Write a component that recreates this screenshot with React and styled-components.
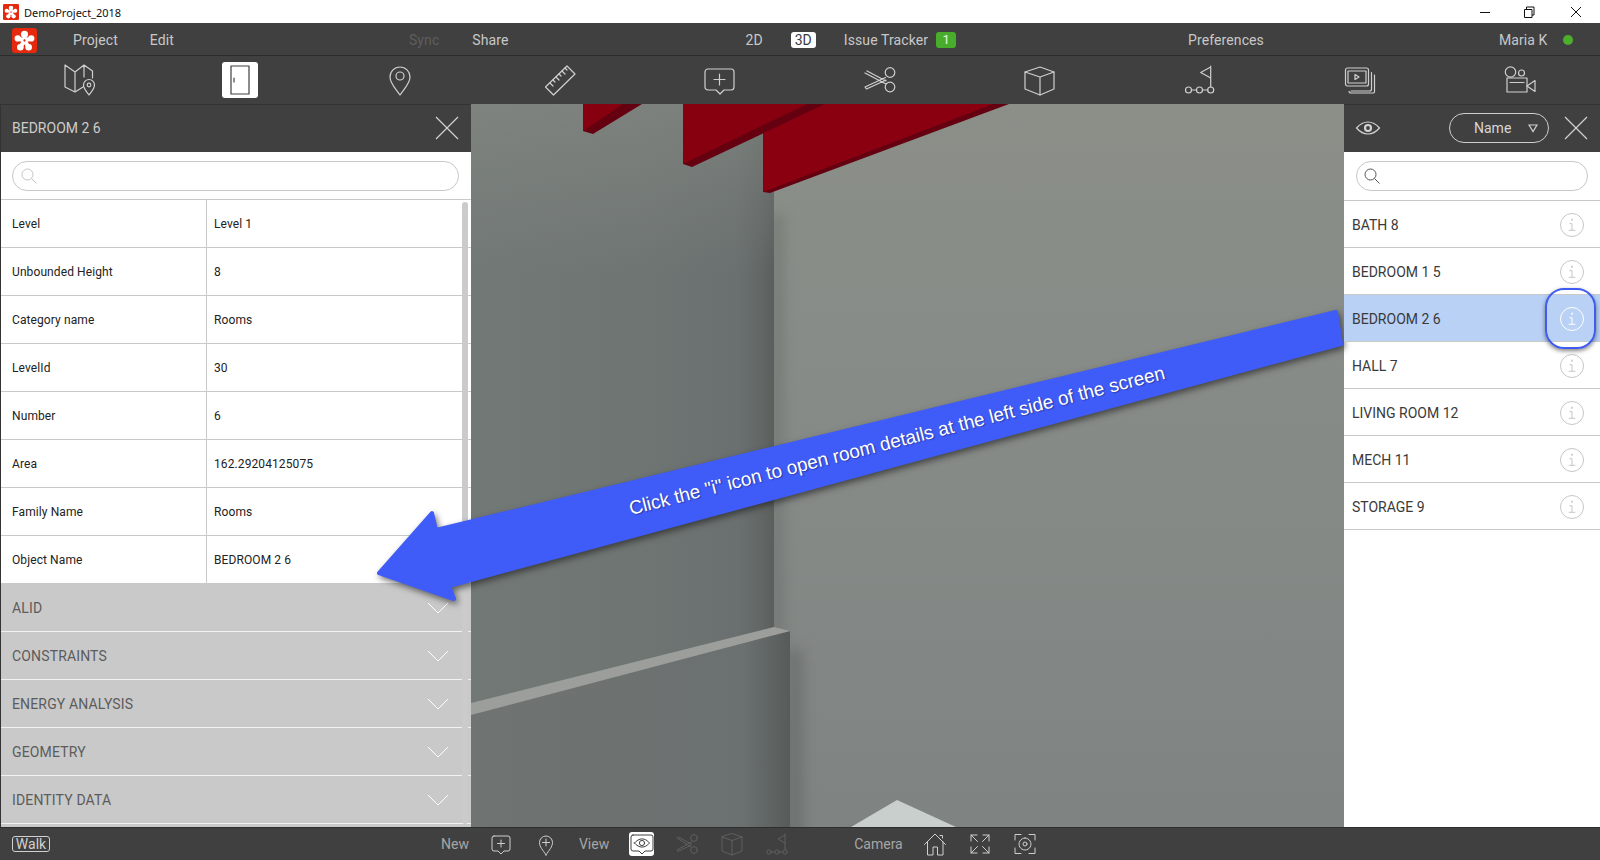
import React from 'react';
import styled, { createGlobalStyle } from 'styled-components';

const GlobalStyle = createGlobalStyle`
  html, body {
    margin: 0;
    padding: 0;
    background: #404040;
    overflow: hidden;
  }
  * { box-sizing: border-box; }
`;

const Page = styled.div`
  position: relative;
  width: 1600px;
  height: 860px;
  display: flex;
  flex-direction: column;
  font-family: Roboto, "Liberation Sans", sans-serif;
  overflow: hidden;
`;

/* window title bar */
const TitleBar = styled.div`
  height: 23px;
  background: #fff;
  display: flex;
  align-items: center;
  padding-left: 3px;
  flex: none;
`;

const TitleText = styled.span`
  margin-left: 5px;
  padding-top: 1px;
  font-family: "Noto Sans", "Open Sans", sans-serif;
  font-size: 11px;
  color: #111;
`;

const WindowButtons = styled.div`
  margin-left: auto;
  display: flex;
  align-items: center;
`;

const WindowButton = styled.svg`
  width: 46px;
  height: 22px;
  display: block;
  fill: none;
  stroke: #111;
  stroke-width: 1;
`;

/* menu */
const MenuBar = styled.div`
  height: 33px;
  background: #404040;
  border-bottom: 1px solid #2b2b2b;
  display: flex;
  align-items: center;
  padding: 2px 0 0 12px;
  flex: none;
`;

const MenuItem = styled.span`
  margin-left: ${(p) => p.$gap || 0}px;
  font-size: 14px;
  letter-spacing: 0.1px;
  color: ${(p) => (p.$dim ? '#5e5e5e' : '#c8c8c8')};
  white-space: nowrap;
`;

const ModeBadge = styled.span`
  margin-left: ${(p) => p.$gap || 0}px;
  width: 25px;
  height: 16px;
  border-radius: 3px;
  background: #fff;
  color: #3c3c3c;
  font-size: 14px;
  line-height: 16px;
  text-align: center;
`;

const CountBadge = styled.span`
  margin-left: ${(p) => p.$gap || 0}px;
  width: 20px;
  height: 16px;
  border-radius: 3px;
  background: #47ad2b;
  color: #e8f5e3;
  font-size: 13px;
  line-height: 16px;
  text-align: center;
`;

const StatusDot = styled.span`
  margin-left: ${(p) => p.$gap || 0}px;
  width: 10px;
  height: 10px;
  border-radius: 50%;
  background: #4caf2c;
`;

/* main tools row */
const Toolbar = styled.div`
  height: 48px;
  background: #404040;
  display: grid;
  grid-template-columns: repeat(10, 160px);
  align-items: center;
  justify-items: center;
  flex: none;
`;

const ToolSlot = styled.div`
  width: 36px;
  height: 36px;
  border-radius: 3px;
  display: flex;
  align-items: center;
  justify-content: center;
  background: ${(p) => (p.$active ? '#fff' : 'transparent')};
  color: ${(p) => (p.$active ? '#404040' : '#cfcfcf')};
`;

const ToolSvg = styled.svg`
  width: 36px;
  height: 36px;
  display: block;
  fill: none;
  stroke: currentColor;
  stroke-width: 1.2;
  stroke-linejoin: round;
  stroke-linecap: round;
`;

/* middle area */
const Workspace = styled.div`
  flex: 1;
  display: flex;
  min-height: 0;
`;

const LeftPanel = styled.aside`
  position: relative;
  width: 471px;
  flex: none;
  display: flex;
  flex-direction: column;
  background: #c9c9c9;
  border-left: 1px solid #333;
  overflow: hidden;
`;

const RightPanel = styled.aside`
  width: 256px;
  flex: none;
  display: flex;
  flex-direction: column;
  background: #fff;
`;

const PanelHeader = styled.div`
  height: 48px;
  flex: none;
  background: #404040;
  border-top: 1px solid #333;
  display: flex;
  align-items: center;
  padding: 0 12px 2px 11px;
  color: #cdcdcd;
  font-size: 14px;
`;

const HeaderIcon = styled.svg`
  display: block;
  width: ${(p) => p.$size}px;
  height: ${(p) => p.$size}px;
  fill: none;
  stroke: #d2d2d2;
  stroke-width: 1.2;
  margin-left: ${(p) => (p.$push ? 'auto' : '0')};
`;

const SortPill = styled.div`
  margin-left: auto;
  margin-right: 15px;
  width: 100px;
  height: 30px;
  border: 1px solid #cfcfcf;
  border-radius: 15px;
  display: flex;
  align-items: center;
  padding: 0 10px 0 24px;
  color: #d6d6d6;
  font-size: 14px;
`;

const SearchRow = styled.div`
  height: ${(p) => p.$height}px;
  flex: none;
  background: #fff;
  padding: 9px 12px 8px ${(p) => p.$left}px;
  border-bottom: 1.5px solid #c9c9c9;
`;

const SearchBox = styled.div`
  height: 30px;
  border: 1px solid #c8c8c8;
  border-radius: 15px;
  display: flex;
  align-items: center;
  padding-left: ${(p) => p.$inset}px;
`;

const SearchIcon = styled.svg`
  width: 18px;
  height: 18px;
  fill: none;
  stroke: ${(p) => p.$tone};
  stroke-width: 1;
`;

const PropRow = styled.div`
  height: 48px;
  flex: none;
  display: grid;
  grid-template-columns: 205px 1fr;
  background: #fff;
  border-bottom: 1.5px solid #c9c9c9;
  font-size: 12px;
  color: #222;
`;

const PropCell = styled.div`
  display: flex;
  align-items: center;
  padding-left: ${(p) => (p.$value ? 7 : 11)}px;
  border-left: ${(p) => (p.$value ? '1.5px solid #c9c9c9' : 'none')};
  letter-spacing: 0.1px;
`;

const GroupRow = styled.div`
  height: 48px;
  flex: none;
  display: flex;
  align-items: center;
  justify-content: space-between;
  padding: 0 22px 0 11px;
  background: #c9c9c9;
  border-bottom: 1px solid #f2f2f2;
  color: #5c5c5c;
  font-size: 14px;
  letter-spacing: 0.15px;
`;

const Chevron = styled.svg`
  width: 22px;
  height: 12px;
  fill: none;
  stroke: #fff;
  stroke-width: 1;
`;

const ScrollThumb = styled.div`
  position: absolute;
  left: 461px;
  top: 98px;
  bottom: 3px;
  width: 6px;
  border-radius: 3px;
  background: #cbcbcb;
`;

const Viewport = styled.div`
  flex: 1;
  min-width: 0;
  background: #7a7e7b;
`;

const SceneSvg = styled.svg`
  display: block;
  width: 100%;
  height: 100%;
`;

/* room list */
const RoomRow = styled.div`
  position: relative;
  z-index: ${(p) => (p.$selected ? 1 : 0)};
  height: 47px;
  flex: none;
  display: flex;
  align-items: center;
  justify-content: space-between;
  padding: 2px 16px 0 8px;
  background: ${(p) => (p.$selected ? '#b9d1f5' : '#fff')};
  border-bottom: 1.5px solid #c9c9c9;
  color: #3a3a3a;
  font-size: 14px;
`;

const InfoIcon = styled.svg`
  width: 24px;
  height: 24px;
  display: block;
  fill: none;
  stroke: ${(p) => (p.$selected ? '#fff' : '#c6c6c6')};
  stroke-width: 1;
`;

const Highlight = styled.div`
  position: absolute;
  right: 4px;
  top: -7px;
  width: 51px;
  height: 61px;
  border: 2.5px solid #3f5bf0;
  border-radius: 19px;
  box-shadow: 0 2px 4px rgba(30, 30, 30, 0.55);
`;

/* bottom bar */
const BottomBar = styled.div`
  height: 33px;
  flex: none;
  background: #404040;
  border-top: 1px solid #2e2e2e;
  display: flex;
  align-items: center;
  padding-left: 12px;
`;

const WalkBadge = styled.span`
  width: 38px;
  height: 16px;
  border: 1px solid #d0d0d0;
  border-radius: 3px;
  color: #d0d0d0;
  font-size: 14px;
  line-height: 14px;
  text-align: center;
`;

const BarLabel = styled.span`
  margin-left: ${(p) => p.$gap}px;
  font-size: 14px;
  color: #a6a6a6;
`;

const BarSlot = styled.div`
  margin-left: ${(p) => p.$gap}px;
  width: 25px;
  height: 24px;
  border-radius: 3px;
  display: flex;
  align-items: center;
  justify-content: center;
  background: ${(p) => (p.$active ? '#fff' : 'transparent')};
  color: ${(p) => (p.$active ? '#404040' : p.$dim ? '#5f5f5f' : '#cfcfcf')};
`;

const BarSvg = styled.svg`
  width: 24px;
  height: 24px;
  display: block;
  fill: none;
  stroke: currentColor;
  stroke-width: 1;
  stroke-linejoin: round;
  stroke-linecap: round;
`;

/* annotation laid over the screenshot */
const ArrowSvg = styled.svg`
  position: absolute;
  left: 0;
  top: 0;
  width: 1600px;
  height: 860px;
  pointer-events: none;
  filter: drop-shadow(2px 3px 3px rgba(25, 25, 25, 0.6));
`;

const ArrowText = styled.div`
  position: absolute;
  left: 597px;
  top: 430px;
  width: 600px;
  text-align: center;
  font-family: "Liberation Sans", Arial, sans-serif;
  font-size: 19px;
  color: #fff;
  white-space: nowrap;
  transform: rotate(-14.3deg);
  text-shadow: 1px 1px 1px rgba(20, 30, 90, 0.5);
  pointer-events: none;
`;

const LogoMark = ({ size, radius }) => (
  <svg width={size} height={size} viewBox="0 0 24 24" style={{ display: 'block' }}>
    <rect width="24" height="24" rx={radius} fill="#e5290f" />
    <g stroke="#fff" strokeWidth="4" strokeLinecap="round">
      <line x1="12" y1="12" x2="12" y2="6" />
      <line x1="12" y1="12" x2="5.5" y2="10" />
      <line x1="12" y1="12" x2="18.5" y2="10" />
      <line x1="12" y1="12" x2="8" y2="18.5" />
      <line x1="12" y1="12" x2="16" y2="18.5" />
    </g>
    <g fill="#fff">
      <circle cx="12" cy="6" r="3.4" />
      <circle cx="5.5" cy="10" r="3" />
      <circle cx="18.5" cy="10" r="3" />
      <circle cx="8" cy="18.5" r="3.2" />
      <circle cx="16" cy="18.5" r="3.2" />
    </g>
    <circle cx="12" cy="12" r="1.1" fill="#e5290f" />
  </svg>
);

const tools = [
  <>
    <path d="M3 3l10 7 9-7 8.5 6v7M3 3v22l10 5 8-5M13 10v20M22 3v12" />
    <path d="M27 33c-3-4-5.5-6.5-5.5-10a5.5 5.5 0 0 1 11 0c0 3.500-2.500 6-5.500 10z" />
    <circle cx="27" cy="23" r="1.800" />
  </>,
  <>
    <rect x="9" y="4" width="18" height="28" />
    <path d="M12 16v4" />
  </>,
  <>
    <path d="M18 33c-5-7-10-12-10-18a10 10 0 0 1 20 0c0 6-5 11-10 18z" />
    <circle cx="18" cy="14" r="4" />
  </>,
  <>
    <path d="M3.500 25L25 4l8 8-21.500 21z" />
    <path d="M8 21l3 3M11 18l2 2M14 15l3 3M17 12l2 2M20 9l3 3M23 6l2 2" />
  </>,
  <>
    <path d="M6 7h23a3 3 0 0 1 3 3v15a3 3 0 0 1-3 3h-7l-4 4-4-4H6a3 3 0 0 1-3-3V10a3 3 0 0 1 3-3z" />
    <path d="M17.500 12v11M12 17.500h11" />
  </>,
  <>
    <circle cx="28" cy="10.500" r="4.800" />
    <circle cx="28" cy="25" r="4.800" />
    <path d="M3 11l20 10.500 1.500 0M5 9l19 10M23.500 15.500L3 25l1.500 2L24 18" />
  </>,
  <>
    <path d="M18 5l14 5v17l-14 6-15-6V10z" />
    <path d="M3 10l15 5 14-5M18 15v18" />
  </>,
  <>
    <path d="M28.700 4v21M28.700 5l-10 5.500 10 5.500" />
    <circle cx="6.500" cy="28" r="3" />
    <circle cx="17.500" cy="28" r="3" />
    <circle cx="28.700" cy="28" r="3" />
    <path d="M9.500 28h5M20.500 28h5.200" />
  </>,
  <>
    <rect x="3.500" y="6" width="23" height="18" rx="2" />
    <rect x="6" y="9" width="18" height="12" />
    <path d="M13 12.500v5l4-2.500z" />
    <path d="M29.500 10.500V27a2 2 0 0 1-2 2H9M32.500 13v17a1.500 1.500 0 0 1-1.500 1H9a2 2 0 0 1-2-1.500" />
  </>,
  <>
    <circle cx="8.500" cy="10" r="5.200" />
    <circle cx="19.500" cy="11" r="3" />
    <rect x="5" y="16" width="20" height="14" />
    <path d="M8 20.500h14M25 24l8-5.500v11z" />
  </>,
];

const BubblePlus = () => (
  <BarSvg viewBox="0 0 24 24">
    <path d="M5 4h14a2 2 0 0 1 2 2v11a2 2 0 0 1-2 2h-4l-3 3-3-3H5a2 2 0 0 1-2-2V6a2 2 0 0 1 2-2z" />
    <path d="M12 8v7M8.500 11.500h7" />
  </BarSvg>
);

const PinPlus = () => (
  <BarSvg viewBox="0 0 24 24">
    <path d="M12 23c-3-5-6.500-8-6.500-12.500a6.500 6.500 0 0 1 13 0C18.500 15 15 18 12 23z" />
    <path d="M12 7v7M8.500 10.500h7" />
  </BarSvg>
);

const BubbleEye = () => (
  <BarSvg viewBox="0 0 24 24">
    <path d="M3 3h18a2 2 0 0 1 2 2v12a2 2 0 0 1-2 2h-6l-3 3-3-3H3a2 2 0 0 1-2-2V5a2 2 0 0 1 2-2z" />
    <path d="M4.500 11c4.500-5.500 10.500-5.500 15 0-4.500 5.500-10.500 5.500-15 0z" />
    <circle cx="12" cy="11" r="2.600" />
  </BarSvg>
);

const SmallScissors = () => (
  <BarSvg viewBox="0 0 24 24">
    <circle cx="19" cy="6" r="3.400" />
    <circle cx="19" cy="18" r="3.400" />
    <path d="M2 6l14 9M3 5l13.500 7M16.500 10L2 18l1 1.500L16 13" />
  </BarSvg>
);

const SmallCube = () => (
  <BarSvg viewBox="0 0 24 24">
    <path d="M12 1.500l10 3.500v14l-10 4-10-4V5z" />
    <path d="M2 5l10 3.500L22 5M12 8.500V23" />
  </BarSvg>
);

const SmallFlag = () => (
  <BarSvg viewBox="0 0 24 24">
    <path d="M20 2v16M20 3l-7 4 7 4" />
    <circle cx="4" cy="20" r="2.200" />
    <circle cx="12" cy="20" r="2.200" />
    <circle cx="20" cy="20" r="2.200" />
    <path d="M6.200 20h3.600M14.200 20h3.600" />
  </BarSvg>
);

const HomeIcon = () => (
  <BarSvg viewBox="0 0 24 24">
    <path d="M1.500 12.500L12 2l10.500 10.500M4.500 10v13h5.500v-8h4.500v8H20V10" />
    <path d="M17 3.500h2.500V6" />
  </BarSvg>
);

const ExpandIcon = () => (
  <BarSvg viewBox="0 0 24 24">
    <path d="M3 9V3h6M3 3l6.500 6.500M21 9V3h-6M21 3l-6.500 6.500M3 15v6h6M3 21l6.500-6.500M21 15v6h-6M21 21l-6.500-6.500" />
  </BarSvg>
);

const FocusIcon = () => (
  <BarSvg viewBox="0 0 24 24">
    <path d="M2 8V2.500h6M22 8V2.500h-6M2 16v5.500h6M22 16v5.500h-6" />
    <path d="M12 6a6 6 0 1 0 .01 0z" />
    <circle cx="12" cy="12" r="2" />
  </BarSvg>
);

const CloseGlyph = ({ size, push }) => (
  <HeaderIcon $size={size} $push={push} viewBox="0 0 24 24">
    <path d="M1 1l22 22M23 1L1 23" />
  </HeaderIcon>
);

const properties = [
  ['Level', 'Level 1'],
  ['Unbounded Height', '8'],
  ['Category name', 'Rooms'],
  ['LevelId', '30'],
  ['Number', '6'],
  ['Area', '162.29204125075'],
  ['Family Name', 'Rooms'],
  ['Object Name', 'BEDROOM 2 6'],
];

const groups = ['ALID', 'CONSTRAINTS', 'ENERGY ANALYSIS', 'GEOMETRY', 'IDENTITY DATA'];

const rooms = ['BATH 8', 'BEDROOM 1 5', 'BEDROOM 2 6', 'HALL 7', 'LIVING ROOM 12', 'MECH 11', 'STORAGE 9'];

// viewport 3D scene, coords are page px minus (471,104)
const Scene = () => (
  <SceneSvg viewBox="0 0 873 723" preserveAspectRatio="none">
    <defs>
      <linearGradient id="wallL" x1="0" y1="0" x2="1" y2="0">
        <stop offset="0" stopColor="#727876" />
        <stop offset="0.55" stopColor="#6f7573" />
        <stop offset="0.88" stopColor="#6a706f" />
        <stop offset="0.96" stopColor="#626766" />
        <stop offset="1" stopColor="#5a5f5e" />
      </linearGradient>
      <linearGradient id="wallLow" x1="0" y1="0" x2="1" y2="0">
        <stop offset="0" stopColor="#6f7472" />
        <stop offset="0.85" stopColor="#6b7070" />
        <stop offset="1" stopColor="#575c5b" />
      </linearGradient>
      <linearGradient id="wallR" x1="0" y1="0" x2="0" y2="1">
        <stop offset="0" stopColor="#8b8f88" />
        <stop offset="0.5" stopColor="#868a87" />
        <stop offset="1" stopColor="#7f8382" />
      </linearGradient>
      <linearGradient id="topShade" x1="0" y1="0" x2="0" y2="1">
        <stop offset="0" stopColor="#8a8e88" stopOpacity="0.5" />
        <stop offset="1" stopColor="#8a8e88" stopOpacity="0" />
      </linearGradient>
      <radialGradient id="floorGlow" cx="0.5" cy="1" r="0.6">
        <stop offset="0.6" stopColor="#5e6362" stopOpacity="0.6" />
        <stop offset="1" stopColor="#5e6362" stopOpacity="0" />
      </radialGradient>
      <filter id="soft" x="-100%" y="-20%" width="300%" height="140%">
        <feGaussianBlur stdDeviation="7" />
      </filter>
    </defs>
    <rect x="303" y="0" width="570" height="723" fill="url(#wallR)" />

    {/* soft shadow where the walls meet */}
    <rect x="298" y="110" width="14" height="430" fill="#565b5a" opacity="0.35" filter="url(#soft)" />
    <rect x="314" y="545" width="18" height="200" fill="#565b5a" opacity="0.45" filter="url(#soft)" />

    <rect x="0" y="0" width="303" height="723" fill="url(#wallL)" />
    <rect x="0" y="0" width="303" height="170" fill="url(#topShade)" />

    {/* lower wall and ledge */}
    <path d="M0 611L319 527V723H0z" fill="url(#wallLow)" />
    <path d="M0 599L303 523L319 527L0 611z" fill="#9b9e9b" />

    {/* floor piece */}
    <ellipse cx="426" cy="723" rx="100" ry="40" fill="url(#floorGlow)" />
    <path d="M380 723L426 696L485 723z" fill="#c9cfcc" />

    {/* red beams, the far one sits behind the middle one */}
    <path d="M292 0V88L299 89L538 0z" fill="#640010" />
    <path d="M292 0V88L522 0z" fill="#8a0010" />
    <path d="M212 0V60L221 63L354 0z" fill="#640010" />
    <path d="M212 0V60L336 0z" fill="#87000f" />
    <path d="M112 0V27L122 30L171 0z" fill="#640010" />
    <path d="M112 0V27L152 0z" fill="#87000f" />
  </SceneSvg>
);

export default function App() {
  return (
    <Page>
      <GlobalStyle />
      <TitleBar>
        <LogoMark size={16} radius={2} />
        <TitleText>DemoProject_2018</TitleText>
        <WindowButtons>
          <WindowButton viewBox="0 0 46 22">
            <path d="M18 11.500h10" />
          </WindowButton>
          <WindowButton viewBox="0 0 46 22">
            <path d="M16.500 8.500h7.500v8h-7.500zM18.500 8.500v-2.500h7.500v8h-2" />
          </WindowButton>
          <WindowButton viewBox="0 0 46 22">
            <path d="M17 6l10 10M27 6L17 16" />
          </WindowButton>
        </WindowButtons>
      </TitleBar>

      <MenuBar>
        <LogoMark size={25} radius={3} />
        <MenuItem $gap={36}>Project</MenuItem>
        <MenuItem $gap={32}>Edit</MenuItem>
        <MenuItem $gap={235} $dim>Sync</MenuItem>
        <MenuItem $gap={33}>Share</MenuItem>
        <MenuItem $gap={237}>2D</MenuItem>
        <ModeBadge $gap={28}>3D</ModeBadge>
        <MenuItem $gap={28}>Issue Tracker</MenuItem>
        <CountBadge $gap={8}>1</CountBadge>
        <MenuItem $gap={232}>Preferences</MenuItem>
        <MenuItem $gap={235}>Maria K</MenuItem>
        <StatusDot $gap={15} />
      </MenuBar>

      <Toolbar>
        {tools.map((shape, i) => (
          <ToolSlot key={i} $active={i === 1}>
            <ToolSvg viewBox="0 0 36 36">{shape}</ToolSvg>
          </ToolSlot>
        ))}
      </Toolbar>

      <Workspace>
        <LeftPanel>
          <PanelHeader>
            BEDROOM 2 6
            <CloseGlyph size={24} push />
          </PanelHeader>
          <SearchRow $left={11} $height={48}>
            <SearchBox $inset={7}>
              <SearchIcon $tone="#c4c4c4" viewBox="0 0 18 18">
                <circle cx="7.500" cy="7.500" r="5.500" />
                <path d="M11.500 11.500l5 5" />
              </SearchIcon>
            </SearchBox>
          </SearchRow>
          {properties.map(([name, value]) => (
            <PropRow key={name}>
              <PropCell>{name}</PropCell>
              <PropCell $value>{value}</PropCell>
            </PropRow>
          ))}
          {groups.map((name) => (
            <GroupRow key={name}>
              {name}
              <Chevron viewBox="0 0 22 12">
                <path d="M1 1l10 10L21 1" />
              </Chevron>
            </GroupRow>
          ))}
          <ScrollThumb />
        </LeftPanel>

        <Viewport>
          <Scene />
        </Viewport>

        <RightPanel>
          <PanelHeader>
            <HeaderIcon $size={26} viewBox="0 0 26 26">
              <path d="M1.500 13c7-8 16-8 23 0-7 8-16 8-23 0z" />
              <circle cx="13" cy="13" r="3" strokeWidth="2.200" />
            </HeaderIcon>
            <SortPill>
              Name
              <HeaderIcon $size={10} $push viewBox="0 0 10 10">
                <path d="M1 2h8L5 8.500z" />
              </HeaderIcon>
            </SortPill>
            <CloseGlyph size={24} />
          </PanelHeader>
          <SearchRow $left={12} $height={49}>
            <SearchBox $inset={6}>
              <SearchIcon $tone="#555" viewBox="0 0 18 18">
                <circle cx="7.500" cy="7.500" r="5.500" />
                <path d="M11.500 11.500l5 5" />
              </SearchIcon>
            </SearchBox>
          </SearchRow>
          {rooms.map((name, i) => (
            <RoomRow key={name} $selected={i === 2}>
              {name}
              <InfoIcon $selected={i === 2} viewBox="0 0 24 24">
                <circle cx="12" cy="12" r="11.500" />
                <path d="M9.500 10.700h2.500v6.600M8.800 17.300h6.600" />
                <path d="M12 6.300v1" strokeWidth="1.400" strokeLinecap="round" />
              </InfoIcon>
              {i === 2 && <Highlight />}
            </RoomRow>
          ))}
        </RightPanel>
      </Workspace>

      <BottomBar>
        <WalkBadge>Walk</WalkBadge>
        <BarLabel $gap={391}>New</BarLabel>
        <BarSlot $gap={20}><BubblePlus /></BarSlot>
        <BarSlot $gap={20}><PinPlus /></BarSlot>
        <BarLabel $gap={20}>View</BarLabel>
        <BarSlot $gap={20} $active><BubbleEye /></BarSlot>
        <BarSlot $gap={20} $dim><SmallScissors /></BarSlot>
        <BarSlot $gap={20} $dim><SmallCube /></BarSlot>
        <BarSlot $gap={20} $dim><SmallFlag /></BarSlot>
        <BarLabel $gap={65}>Camera</BarLabel>
        <BarSlot $gap={20}><HomeIcon /></BarSlot>
        <BarSlot $gap={20}><ExpandIcon /></BarSlot>
        <BarSlot $gap={20}><FocusIcon /></BarSlot>
      </BottomBar>

      <ArrowSvg viewBox="0 0 1600 860">
        <path
          d="M379 573L432 513L436 530L1336 312L1341 344L449 586L454 599z"
          fill="#3f5bf8"
          stroke="#3f5bf8"
          strokeWidth="4"
          strokeLinejoin="round"
        />
      </ArrowSvg>
      <ArrowText>Click the "i" icon to open room details at the left side of the screen</ArrowText>
    </Page>
  );
}
